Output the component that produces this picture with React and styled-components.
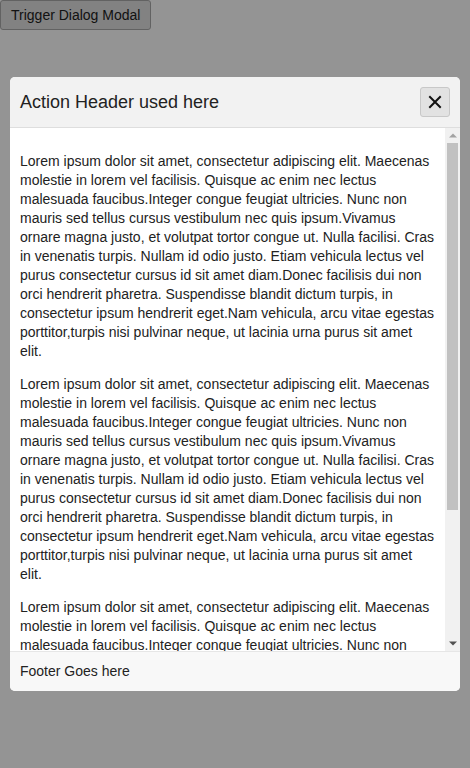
import React from "react";
import styled, { createGlobalStyle } from "styled-components";

const Global = createGlobalStyle`
  html, body { margin: 0; padding: 0; background: #fff; }
  body { font-family: "Liberation Sans", Arial, sans-serif; color: #222; }
`;

const Trigger = styled.button`
  font-family: "Liberation Sans", Arial, sans-serif;
  font-size: 14px;
  color: #222;
  background: #e0e0e0;
  border: 1px solid #aaa;
  border-radius: 3px;
  padding: 6px 10px;
  margin: 0;
  line-height: 16px;
`;

const Overlay = styled.div`
  position: fixed;
  inset: 0;
  background: rgba(0, 0, 0, 0.42);
  display: flex;
  align-items: center;
  justify-content: center;
`;

const Modal = styled.div`
  width: 450px;
  height: 614px;
  background: #fff;
  border-radius: 5px;
  display: flex;
  flex-direction: column;
  overflow: hidden;
`;

const Header = styled.div`
  flex: none;
  height: 50px;
  background: #f2f2f2;
  border-bottom: 1px solid #dedede;
  display: flex;
  align-items: center;
  justify-content: space-between;
  padding: 0 10px;
`;

const Title = styled.h2`
  margin: 0;
  font-size: 18px;
  font-weight: normal;
  color: #222;
`;

const Close = styled.button`
  width: 30px;
  height: 30px;
  border: 1px solid #c8c8c8;
  background: #e2e2e2;
  border-radius: 3px;
  display: flex;
  align-items: center;
  justify-content: center;
  padding: 0;
`;

const BodyRow = styled.div`
  flex: 1;
  min-height: 0;
  display: flex;
`;

const Body = styled.div`
  flex: 1;
  min-width: 0;
  overflow: hidden;
  padding: 10px;
`;

const Scrollbar = styled.div`
  flex: none;
  width: 15px;
  background: #f1f1f1;
  display: flex;
  flex-direction: column;
`;

const ArrowButton = styled.div`
  flex: none;
  height: 15px;
  display: flex;
  align-items: center;
  justify-content: center;
`;

const Thumb = styled.div`
  flex: none;
  height: 367px;
  margin: 0 2px;
  background: #c1c1c1;
`;

const Track = styled.div`
  flex: 1;
`;

const Para = styled.p`
  margin: 14px 0;
  font-size: 14px;
  line-height: 19px;
  color: #222;
`;

const Footer = styled.div`
  flex: none;
  background: #f8f8f8;
  border-top: 1px solid #e6e6e6;
  padding: 10px;
  font-size: 14px;
  line-height: 19px;
  color: #222;
`;

const TEXT =
  "Lorem ipsum dolor sit amet, consectetur adipiscing elit. Maecenas molestie in lorem vel facilisis. Quisque ac enim nec lectus malesuada faucibus.Integer congue feugiat ultricies. Nunc non mauris sed tellus cursus vestibulum nec quis ipsum.Vivamus ornare magna justo, et volutpat tortor congue ut. Nulla facilisi. Cras in venenatis turpis. Nullam id odio justo. Etiam vehicula lectus vel purus consectetur cursus id sit amet diam.Donec facilisis dui non orci hendrerit pharetra. Suspendisse blandit dictum turpis, in consectetur ipsum hendrerit eget.Nam vehicula, arcu vitae egestas porttitor,turpis nisi pulvinar neque, ut lacinia urna purus sit amet elit.";

export default function App() {
  return (
    <>
      <Global />
      <Trigger>Trigger Dialog Modal</Trigger>
      <Overlay>
        <Modal>
          <Header>
            <Title>Action Header used here</Title>
            <Close aria-label="close">
              <svg width="14" height="14" viewBox="0 0 14 14">
                <path d="M2 2L12 12M12 2L2 12" stroke="#111" strokeWidth="2" strokeLinecap="square" />
              </svg>
            </Close>
          </Header>
          <BodyRow>
            <Body>
              <Para>{TEXT}</Para>
              <Para>{TEXT}</Para>
              <Para>{TEXT}</Para>
            </Body>
            <Scrollbar>
              <ArrowButton>
                <svg width="8" height="5" viewBox="0 0 8 5">
                  <path d="M0 4.5L4 0.5L8 4.5Z" fill="#a3a3a3" />
                </svg>
              </ArrowButton>
              <Thumb />
              <Track />
              <ArrowButton>
                <svg width="8" height="5" viewBox="0 0 8 5">
                  <path d="M0 0.5L4 4.5L8 0.5Z" fill="#505050" />
                </svg>
              </ArrowButton>
            </Scrollbar>
          </BodyRow>
          <Footer>Footer Goes here</Footer>
        </Modal>
      </Overlay>
    </>
  );
}
